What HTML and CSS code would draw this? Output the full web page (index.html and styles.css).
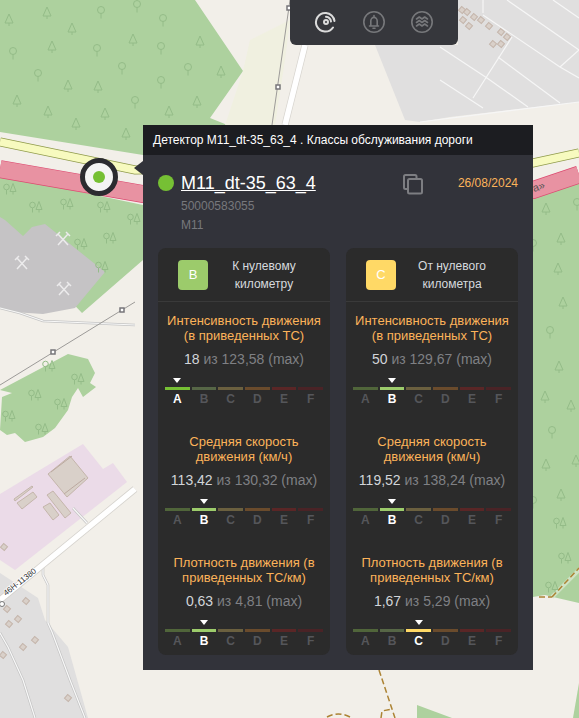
FILE: index.html

```html
<!DOCTYPE html>
<html lang="ru">
<head>
  <meta charset="UTF-8" />
  <meta name="viewport" content="width=device-width, initial-scale=1.0"/>
  <title>Детектор M11_dt-35_63_4</title>
  <link rel="stylesheet" href="styles.css">
</head>
<body>
  <!-- base map -->
  <svg class="map" width="579" height="718" viewBox="0 0 579 718">
    <defs>
      <g id="fir" class="tree"><path d="M0 -6 L-4 3 H4 Z M0 3 V6"/></g>
      <g id="oak" class="tree"><circle cy="-2" r="3.5"/><path d="M0 1.5 V6.5"/></g>
      <g id="pair" class="tree"><circle cx="-3.5" cy="-2" r="2.8"/><path d="M-3.5 1 V5.5 M3 -5.5 L0 2.5 H6 Z M3 2.5 V5.5"/></g>
      <g id="mine" class="mine"><path d="M-5 -5 L5 6 M5 -5 L-5 6 M-7 -3 L-3 -7 M3 -7 L7 -3"/></g>
      <g id="hut" class="building"><rect x="-2.5" y="-2.5" width="5" height="5" transform="rotate(40)"/></g>
      <path id="tracks" d="M0 308 L20 313 L43 321 L135 325 M43 563 V575 L48 585 V623 L52 632 L70 680 L85 718 M0 633 L8 647 L23 680 L35 718 M73 508 L87 523"/>
    </defs>

    <!-- land use -->
    <polygon class="forest" points="0,0 195,0 243,71 210,118 240,130 143,155 0,132"/>
    <polygon class="forest" points="0,175 143,205 143,260 82,313 60,290 0,240"/>
    <polygon class="forest" points="533,195 579,180 579,603 553,597 545,595 533,597"/>
    <polygon class="forest" points="0,390 68,354 88,359 95,373 90,383 96,387 83,397 78,388 72,397 68,410 55,428 43,437 25,442 15,433 7,435 0,430 2,397 12,393"/>
    <polygon class="forest" points="417,705 452,718 417,718"/>
    <polygon class="forest" points="579,683 573,718 579,718"/>
    <polygon class="meadow" points="243,71 250,40 290,20 285,60 275,125 225,125"/>
    <polygon class="quarry" points="0,217 5,220 23,236 32,227 45,224 105,272 75,308 43,314 13,312 0,307"/>
    <polygon class="industrial" points="83,444 103,469 113,463 127,482 15,570 0,560 0,494"/>
    <polygon class="residential" points="375,45 458,45 458,0 579,0 579,102 450,117 420,122 405,120"/>
    <polygon class="residential" points="0,573 38,598 45,620 68,647 88,718 0,718"/>

    <!-- buildings -->
    <polygon class="building" points="70,456 88,478 67,497 48,474"/>
    <path class="building-line" d="M51 472 L72 456 M64 494 L85 478"/>
    <polygon class="building" points="14,499 32,486 33,487 15,501"/>
    <polygon class="building" points="17,503 33,492 37,497 22,509"/>
    <polygon class="building" points="47,495 53,491 71,513 65,518"/>
    <polygon class="building" points="43,507 50,503 59,515 53,520"/>
    <use href="#hut" x="4" y="547"/>
    <use href="#hut" x="26" y="601"/>
    <use href="#hut" x="7" y="609"/>
    <use href="#hut" x="18" y="619"/>
    <use href="#hut" x="9" y="624"/>
    <use href="#hut" x="35" y="640"/>
    <use href="#hut" x="23" y="647"/>
    <use href="#hut" x="3" y="655"/>
    <use href="#hut" x="68" y="698"/>
    <use href="#hut" x="462" y="10"/>
    <use href="#hut" x="467" y="12"/>
    <use href="#hut" x="474" y="17"/>
    <use href="#hut" x="481" y="20"/>
    <use href="#hut" x="463" y="20"/>
    <use href="#hut" x="469" y="26"/>
    <use href="#hut" x="489" y="26"/>
    <use href="#hut" x="501" y="32"/>
    <use href="#hut" x="507" y="37"/>
    <use href="#hut" x="493" y="44"/>
    <use href="#hut" x="501" y="44"/>

    <!-- residential streets -->
    <path class="street" d="M440 47 L487 78 L528 107 M440 80 L483 108 M483 15 L560 67 L579 78 M507 0 L579 50 M553 0 L579 18 M512 37 L473 98 M483 0 V13 M560 67 L579 50 M498 57 L560 103 M420 122 L579 102"/>

    <!-- roads -->
    <use class="track-edge" href="#tracks"/>
    <use class="track-core" href="#tracks"/>
    <path class="road-minor-edge" d="M135 489 L0 600"/>
    <path class="road-minor" d="M135 489 L0 600"/>
    <path class="road-minor-edge" d="M305 45 L285 125"/>
    <path class="road-minor" d="M305 45 L285 125"/>
    <path class="road-yellow-edge" d="M0 142 L135 170 L533 163 L579 153"/>
    <path class="road-yellow" d="M0 142 L135 170 L533 163 L579 153"/>
    <path class="road-pink-edge" d="M0 169 L143 194 L533 190 L579 174.5"/>
    <path class="road-pink" d="M0 169 L143 194 L533 190 L579 174.5"/>

    <!-- power lines -->
    <path class="power" d="M0 385 L135 302 M290 0 L272 125"/>
    <g class="pylon">
      <rect x="51" y="350" width="4" height="4"/>
      <rect x="120" y="308" width="4" height="4"/>
      <rect x="287" y="6" width="4" height="4"/>
      <rect x="276" y="85" width="4" height="4"/>
    </g>

    <!-- trails -->
    <path class="trail-bed" d="M552 597 L579 570"/>
    <path class="trail" d="M379 670 L395 718 M381 718 L382 711 L392 709 M327 717 Q338 711 350 717 M539 597 L552 597 M552 597 L579 568"/>

    <!-- forest symbols -->
    <use href="#fir" x="9" y="20"/><use href="#fir" x="47" y="13"/><use href="#fir" x="72" y="29"/>
    <use href="#fir" x="52" y="47"/><use href="#fir" x="133" y="40"/><use href="#fir" x="200" y="42"/>
    <use href="#fir" x="68" y="86"/><use href="#fir" x="98" y="87"/><use href="#fir" x="17" y="101"/>
    <use href="#fir" x="48" y="112"/><use href="#fir" x="105" y="114"/><use href="#fir" x="76" y="124"/>
    <use href="#fir" x="126" y="134"/><use href="#fir" x="169" y="112"/><use href="#fir" x="197" y="102"/>
    <use href="#fir" x="221" y="72"/>
    <use href="#oak" x="101" y="12"/><use href="#oak" x="137" y="6"/><use href="#oak" x="163" y="20"/>
    <use href="#oak" x="13" y="53"/><use href="#oak" x="97" y="50"/><use href="#oak" x="161" y="48"/>
    <use href="#oak" x="38" y="75"/><use href="#oak" x="122" y="68"/><use href="#oak" x="188" y="69"/>
    <use href="#oak" x="161" y="82"/><use href="#oak" x="135" y="102"/>
    <use href="#pair" x="36" y="207"/><use href="#pair" x="67" y="204"/><use href="#pair" x="104" y="207"/>
    <use href="#pair" x="134" y="219"/><use href="#pair" x="10" y="189"/><use href="#pair" x="110" y="238"/>
    <use href="#pair" x="81" y="244"/><use href="#pair" x="102" y="267"/><use href="#pair" x="49" y="366"/>
    <use href="#pair" x="78" y="379"/><use href="#pair" x="35" y="395"/><use href="#pair" x="61" y="404"/>
    <use href="#pair" x="9" y="416"/><use href="#pair" x="42" y="429"/>
    <use href="#fir" x="546" y="209"/><use href="#fir" x="561" y="239"/><use href="#fir" x="558" y="269"/>
    <use href="#fir" x="563" y="303"/><use href="#fir" x="559" y="367"/><use href="#fir" x="545" y="397"/>
    <use href="#fir" x="571" y="406"/><use href="#fir" x="546" y="465"/><use href="#fir" x="576" y="461"/>
    <use href="#fir" x="561" y="495"/>
    <use href="#oak" x="577" y="204"/><use href="#oak" x="533" y="245"/><use href="#oak" x="550" y="332"/>
    <use href="#oak" x="552" y="432"/><use href="#oak" x="533" y="502"/>
    <use href="#pair" x="560" y="523"/><use href="#pair" x="565" y="558"/><use href="#pair" x="552" y="587"/>
    <use href="#mine" x="22" y="263"/><use href="#mine" x="64" y="289"/><use href="#mine" x="63" y="239"/>

    <!-- labels -->
    <text class="road-label" transform="translate(6 596) rotate(-38)">46Н-11380</text>
    <circle class="road-ref" cx="2" cy="604" r="2.5"/>
    <text class="road-name" transform="translate(534 192) rotate(-18)">а»</text>

    <!-- detector marker -->
    <circle class="marker-ring" cx="99" cy="177" r="16.5"/>
    <circle class="marker-dot" cx="99" cy="177" r="6"/>
  </svg>

  <!-- map tools -->
  <div class="toolbar">
    <svg class="tool tool-active" width="24" height="24" viewBox="0 0 24 24">
      <path d="M11.5 3 A9.3 9.3 0 1 0 19 17.5"/>
      <path d="M12 3 A9.3 9.3 0 0 1 20.5 11"/>
      <path d="M12 6.8 A5.6 5.6 0 0 1 17 11.5"/>
      <circle cx="12" cy="12" r="2"/>
    </svg>
    <svg class="tool" width="24" height="24" viewBox="0 0 24 24">
      <circle cx="12" cy="12" r="10.2"/>
      <path d="M7.5 16 H16.5 M8.8 16 V11 A3.2 3.6 0 0 1 15.2 11 V16 M12 5.5 V7.4 M11 18.2 H13"/>
    </svg>
    <svg class="tool" width="24" height="24" viewBox="0 0 24 24">
      <circle cx="12" cy="12" r="10.2"/>
      <path d="M6.5 9 L9.3 7 L12 9 L14.7 7 L17.5 9 M6.5 12.5 L9.3 10.5 L12 12.5 L14.7 10.5 L17.5 12.5 M6.5 16 L9.3 14 L12 16 L14.7 14 L17.5 16"/>
    </svg>
  </div>

  <!-- detector popup -->
  <div class="popup">
    <div class="popup-title">Детектор M11_dt-35_63_4 . Классы обслуживания дороги</div>
    <div class="popup-body">
      <div class="detector">
        <span class="status-dot"></span>
        <div class="detector-info">
          <a class="detector-name">M11_dt-35_63_4</a>
          <div class="detector-meta">50000583055</div>
          <div class="detector-meta">M11</div>
        </div>
        <svg class="copy-icon" width="22" height="22" viewBox="0 0 22 22">
          <path d="M5 16 H3.5 A1.5 1.5 0 0 1 2 14.5 V3.5 A1.5 1.5 0 0 1 3.5 2 H13 A1.5 1.5 0 0 1 14.5 3.5 V6"/>
          <rect x="6" y="6" width="14" height="14.5" rx="1.5"/>
        </svg>
        <div class="detector-date">26/08/2024</div>
      </div>

      <div class="directions">
        <div class="card">
          <div class="card-head">
            <div class="badge badge-b">B</div>
            <div class="card-label">К нулевому километру</div>
          </div>
          <div class="metric">
            <div class="metric-title">Интенсивность движения (в приведенных ТС)</div>
            <div class="metric-value"><b>18</b> из 123,58 (max)</div>
            <div class="scale">
              <div class="level level-a active">A</div><div class="level level-b">B</div><div class="level level-c">C</div><div class="level level-d">D</div><div class="level level-e">E</div><div class="level level-f">F</div>
            </div>
          </div>
          <div class="metric">
            <div class="metric-title">Средняя скорость движения (км/ч)</div>
            <div class="metric-value"><b>113,42</b> из 130,32 (max)</div>
            <div class="scale">
              <div class="level level-a">A</div><div class="level level-b active">B</div><div class="level level-c">C</div><div class="level level-d">D</div><div class="level level-e">E</div><div class="level level-f">F</div>
            </div>
          </div>
          <div class="metric">
            <div class="metric-title">Плотность движения (в приведенных ТС/км)</div>
            <div class="metric-value"><b>0,63</b> из 4,81 (max)</div>
            <div class="scale">
              <div class="level level-a">A</div><div class="level level-b active">B</div><div class="level level-c">C</div><div class="level level-d">D</div><div class="level level-e">E</div><div class="level level-f">F</div>
            </div>
          </div>
        </div>

        <div class="card">
          <div class="card-head">
            <div class="badge badge-c">C</div>
            <div class="card-label">От нулевого километра</div>
          </div>
          <div class="metric">
            <div class="metric-title">Интенсивность движения (в приведенных ТС)</div>
            <div class="metric-value"><b>50</b> из 129,67 (max)</div>
            <div class="scale">
              <div class="level level-a">A</div><div class="level level-b active">B</div><div class="level level-c">C</div><div class="level level-d">D</div><div class="level level-e">E</div><div class="level level-f">F</div>
            </div>
          </div>
          <div class="metric">
            <div class="metric-title">Средняя скорость движения (км/ч)</div>
            <div class="metric-value"><b>119,52</b> из 138,24 (max)</div>
            <div class="scale">
              <div class="level level-a">A</div><div class="level level-b active">B</div><div class="level level-c">C</div><div class="level level-d">D</div><div class="level level-e">E</div><div class="level level-f">F</div>
            </div>
          </div>
          <div class="metric">
            <div class="metric-title">Плотность движения (в приведенных ТС/км)</div>
            <div class="metric-value"><b>1,67</b> из 5,29 (max)</div>
            <div class="scale">
              <div class="level level-a">A</div><div class="level level-b">B</div><div class="level level-c active">C</div><div class="level level-d">D</div><div class="level level-e">E</div><div class="level level-f">F</div>
            </div>
          </div>
        </div>
      </div>
    </div>
  </div>
</body>
</html>
```

FILE: styles.css

```css
html, body {
  margin: 0;
  height: 100%;
  overflow: hidden;
}
body {
  position: relative;
  width: 579px;
  height: 718px;
  background: #f2efe9;
  font-family: 'Liberation Sans', Arial, sans-serif;
  font-size: 12px;
  color: #fff;
}

/* map */
.map {
  position: absolute;
  left: 0;
  top: 0;
}
.forest { fill: #add19e; }
.meadow { fill: #f0f0e0; }
.quarry { fill: #c5c3c5; }
.industrial { fill: #ebdbe8; }
.residential { fill: #e0dfdf; }
.building { fill: #d9d0c9; stroke: #c4b5ab; stroke-width: 1; }
.building-line { fill: none; stroke: #bca9a0; stroke-width: 1; }
.tree { fill: none; stroke: #94bc88; stroke-width: 1; }
.mine { fill: none; stroke: #ecebec; stroke-width: 1.5; }
.street { fill: none; stroke: #f6f6f6; stroke-width: 1.2; }
.track-edge { fill: none; stroke: #c4c4c4; stroke-width: 2.6; }
.track-core { fill: none; stroke: #f8f8f8; stroke-width: 1.2; }
.road-minor-edge { fill: none; stroke: #d5d2cd; stroke-width: 7; }
.road-minor { fill: none; stroke: #fff; stroke-width: 5.5; }
.road-yellow-edge { fill: none; stroke: #8f9a4a; stroke-width: 9; }
.road-yellow { fill: none; stroke: #f7fabf; stroke-width: 7.5; }
.road-pink-edge { fill: none; stroke: #dc4a70; stroke-width: 18; }
.road-pink { fill: none; stroke: #e892a2; stroke-width: 16.5; }
.power { fill: none; stroke: #9c9a98; stroke-width: 1; }
.pylon rect { fill: #fff; stroke: #77767a; stroke-width: 1.5; }
.trail-bed { fill: none; stroke: #cfe3c5; stroke-width: 4; }
.trail { fill: none; stroke: #ac8334; stroke-width: 1.5; stroke-dasharray: 6 3; }
.road-label {
  font-size: 8px;
  fill: #333;
  stroke: #fff;
  stroke-width: 1.5px;
  paint-order: stroke;
}
.road-ref { fill: #fff; stroke: #777; stroke-width: 1; }
.road-name { font-size: 11px; fill: #555; }
.marker-ring { fill: #f4f4f4; stroke: #2b2b30; stroke-width: 5; }
.marker-dot { fill: #76c034; }

/* toolbar */
.toolbar {
  position: absolute;
  left: 290px;
  top: 0;
  width: 168px;
  height: 45px;
  box-sizing: border-box;
  padding: 0 24px 1px;
  display: flex;
  align-items: center;
  justify-content: space-between;
  background: #36373c;
  border-radius: 0 0 6px 6px;
}
.tool {
  fill: none;
  stroke: #77787b;
  stroke-width: 1.6;
  stroke-linecap: round;
  stroke-linejoin: round;
}
.tool-active {
  stroke: #dcdcdc;
  stroke-width: 2;
}

/* popup */
.popup {
  position: absolute;
  left: 143px;
  top: 125px;
  width: 390px;
  height: 545px;
  background: #32333a;
}
.popup::before {
  content: "";
  position: absolute;
  left: -9px;
  top: 36px;
  border-style: solid;
  border-width: 7.5px 9px 7.5px 0;
  border-color: transparent #32333a transparent transparent;
}
.popup-title {
  height: 30px;
  line-height: 30px;
  padding: 0 10px;
  background: #1c1d21;
  white-space: nowrap;
}
.popup-body {
  padding: 0 15px;
}
.detector {
  height: 93px;
  display: flex;
  align-items: flex-start;
}
.status-dot {
  flex: none;
  width: 16px;
  height: 16px;
  margin-top: 20px;
  border-radius: 50%;
  background: #76c034;
}
.detector-info {
  margin-left: 7px;
  margin-top: 18px;
  width: 221px;
}
.detector-name {
  font-size: 18px;
  line-height: 21px;
  color: #fff;
  text-decoration: underline;
}
.detector-meta {
  color: #77787c;
  line-height: 19px;
}
.detector-meta:first-of-type {
  margin-top: 3px;
}
.copy-icon {
  flex: none;
  margin-top: 18px;
  fill: none;
  stroke: #7d7e82;
  stroke-width: 2;
}
.detector-date {
  margin-left: auto;
  margin-top: 21px;
  color: #fcb35a;
}

.directions {
  display: flex;
  gap: 16px;
}
.card {
  width: 172px;
  height: 407px;
  background: #2b2b2b;
  border-radius: 8px;
}
.card-head {
  height: 54px;
  box-sizing: border-box;
  padding: 12px 10px 0 20px;
  display: flex;
  border-bottom: 1px solid #3a3a3a;
}
.badge {
  flex: none;
  width: 30px;
  height: 30px;
  line-height: 30px;
  text-align: center;
  border-radius: 4px;
  font-size: 13px;
}
.badge-b { background: #9ccb6b; }
.badge-c { background: #ffd966; }
.card-label {
  flex: 1;
  padding: 0 12px;
  margin-top: -3px;
  line-height: 18px;
  text-align: center;
  color: #d6dade;
}
.metric {
  height: 93px;
  margin-top: 11px;
  margin-bottom: 28px;
  padding: 0 7px;
}
.metric-title {
  font-size: 13px;
  line-height: 15px;
  text-align: center;
  color: #fcb35a;
}
.metric-value {
  margin-top: 8px;
  font-size: 14px;
  line-height: 16px;
  text-align: center;
  color: #7f8084;
}
.metric-value b {
  font-weight: normal;
  color: #d2d5d9;
}
.scale {
  margin-top: 20px;
  display: grid;
  grid-template-columns: repeat(6, 1fr);
  column-gap: 2px;
}
.level {
  position: relative;
  border-top: 3px solid;
  padding-top: 2px;
  font-size: 12px;
  line-height: 14px;
  font-weight: bold;
  text-align: center;
  color: #55565a;
}
.level-a { border-color: #50653a; }
.level-b { border-color: #566646; }
.level-c { border-color: #6b603f; }
.level-d { border-color: #6a4b2c; }
.level-e { border-color: #5a2626; }
.level-f { border-color: #4a2326; }
.level.active { color: #fff; }
.level-a.active { border-color: #76c034; }
.level-b.active { border-color: #9ccb6b; }
.level-c.active { border-color: #ffd966; }
.level.active::before {
  content: "";
  position: absolute;
  left: 50%;
  top: -12px;
  margin-left: -4px;
  border-style: solid;
  border-width: 5px 4px 0;
  border-color: #fff transparent transparent;
}
```
